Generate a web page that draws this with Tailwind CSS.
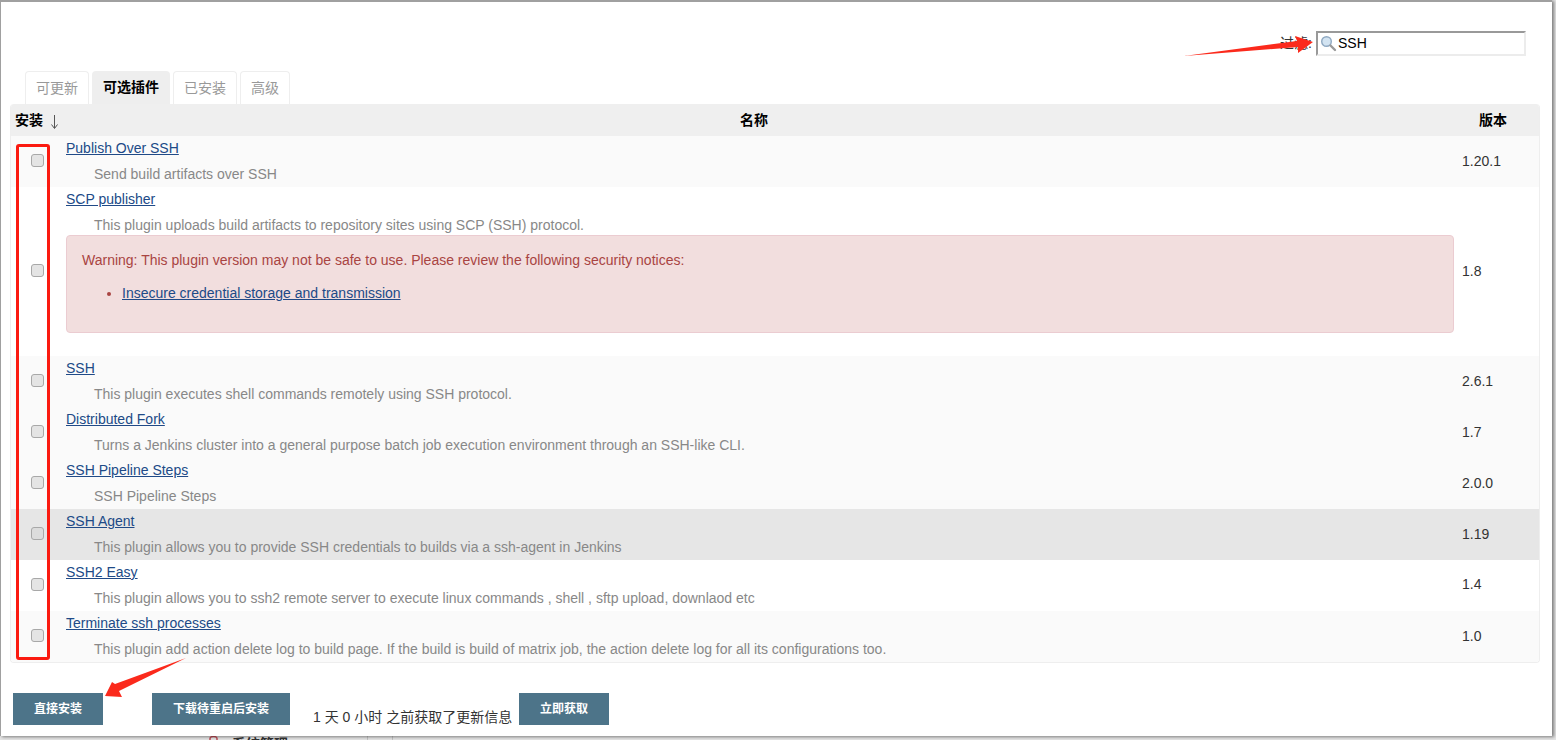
<!DOCTYPE html>
<html lang="en">
<head>
    <meta charset="UTF-8">
    <title>Jenkins Plugins</title>
    <script src="https://cdn.jsdelivr.net/npm/@tailwindcss/browser@4"></script>
</head>
<body class="bg-[#e4e4e4] h-[740px] overflow-hidden text-[14px] text-[#333] font-['Liberation_Sans','Noto_Sans_CJK_SC',sans-serif]">
    <div class="relative z-10 w-[1552px] h-[736px] bg-white border-l border-t-2 border-[#a0a0a0] shadow-[2px_1px_3px_rgba(0,0,0,0.45)]">
        <!-- Filter -->
        <div class="flex justify-end items-center h-[69px] pt-[14px] pr-[26px]">
            <span class="mr-[4px] text-[#333]">过滤:</span>
            <div class="flex items-center w-[210px] h-[25px] border-2 border-[#ececec] border-t-[#999] border-l-[#999] pl-[2px]">
                <svg class="w-[17px] h-[17px] shrink-0" viewBox="0 0 17 17">
                    <circle cx="6.5" cy="6.5" r="4.8" fill="#d3e4f2" stroke="#8fa9c2" stroke-width="1.4"/>
                    <path d="M10.5 10.5L15 15" stroke="#9a9a9a" stroke-width="2.4" stroke-linecap="round"/>
                </svg>
                <span class="ml-[1px] text-black">SSH</span>
            </div>
        </div>

        <!-- Tabs -->
        <div class="flex items-end h-[33px] pl-[24px] gap-[3px]">
            <div class="w-[64px] h-[33px] flex items-center justify-center border border-b-0 border-[#eee] rounded-t text-[#999]">可更新</div>
            <div class="w-[78px] h-[33px] flex items-center justify-center bg-[#eee] rounded-t text-black font-bold">可选插件</div>
            <div class="w-[64px] h-[33px] flex items-center justify-center border border-b-0 border-[#eee] rounded-t text-[#999]">已安装</div>
            <div class="w-[50px] h-[33px] flex items-center justify-center border border-b-0 border-[#eee] rounded-t text-[#999]">高级</div>
        </div>

        <!-- Plugin table -->
        <div class="ml-[9px] w-[1530px] border border-t-0 border-[#eee] rounded overflow-hidden">
            <div class="grid grid-cols-[55px_1fr_77px] items-center h-[32px] bg-[#efefef] text-black font-bold">
                <div class="pl-[4px] flex items-center">安装
                    <svg class="ml-[8px] mt-[3px]" width="7" height="14" viewBox="0 0 7 14"><path d="M3.5 0V13M0.5 9.5L3.5 13.5L6.5 9.5" fill="none" stroke="#555" stroke-width="1"/></svg>
                </div>
                <div class="text-center pr-[20px]">名称</div>
                <div class="text-center pr-[5px] -ml-[10px]">版本</div>
            </div>

            <div class="grid grid-cols-[55px_1fr_77px] h-[51px] bg-[#fafafa]">
                <div class="flex items-center justify-center pr-[3px] pb-[2px]"><input type="checkbox" class="appearance-none w-[13px] h-[13px] bg-[#e4e4e4] border border-[#a8a8a8] rounded-[3px]"></div>
                <div class="pt-[4px]"><a class="block leading-[16px] text-[#204a87] underline">Publish Over SSH</a><p class="mt-[10px] ml-[28px] leading-[16px] text-[#888]">Send build artifacts over SSH</p></div>
                <div class="flex items-center">1.20.1</div>
            </div>

            <div class="grid grid-cols-[55px_1fr_77px] h-[169px] bg-white">
                <div class="flex items-center justify-center pr-[3px] pb-[2px]"><input type="checkbox" class="appearance-none w-[13px] h-[13px] bg-[#e4e4e4] border border-[#a8a8a8] rounded-[3px]"></div>
                <div class="pt-[4px]">
                    <a class="block leading-[16px] text-[#204a87] underline">SCP publisher</a>
                    <p class="mt-[10px] ml-[28px] leading-[16px] text-[#888]">This plugin uploads build artifacts to repository sites using SCP (SSH) protocol.</p>
                    <div class="mt-[2px] w-[1388px] h-[98px] pt-[16px] px-[15px] bg-[#f2dede] border border-[#ebccd1] rounded text-[#a94442]">
                        <p class="leading-[16px]">Warning: This plugin version may not be safe to use. Please review the following security notices:</p>
                        <ul class="mt-[17px] ml-[40px] list-disc"><li class="leading-[16px]"><a class="text-[#204a87] underline">Insecure credential storage and transmission</a></li></ul>
                    </div>
                </div>
                <div class="flex items-center">1.8</div>
            </div>

            <div class="grid grid-cols-[55px_1fr_77px] h-[51px] bg-[#fafafa]">
                <div class="flex items-center justify-center pr-[3px] pb-[2px]"><input type="checkbox" class="appearance-none w-[13px] h-[13px] bg-[#e4e4e4] border border-[#a8a8a8] rounded-[3px]"></div>
                <div class="pt-[4px]"><a class="block leading-[16px] text-[#204a87] underline">SSH</a><p class="mt-[10px] ml-[28px] leading-[16px] text-[#888]">This plugin executes shell commands remotely using SSH protocol.</p></div>
                <div class="flex items-center">2.6.1</div>
            </div>

            <div class="grid grid-cols-[55px_1fr_77px] h-[51px] bg-[#fafafa]">
                <div class="flex items-center justify-center pr-[3px] pb-[2px]"><input type="checkbox" class="appearance-none w-[13px] h-[13px] bg-[#e4e4e4] border border-[#a8a8a8] rounded-[3px]"></div>
                <div class="pt-[4px]"><a class="block leading-[16px] text-[#204a87] underline">Distributed Fork</a><p class="mt-[10px] ml-[28px] leading-[16px] text-[#888]">Turns a Jenkins cluster into a general purpose batch job execution environment through an SSH-like CLI.</p></div>
                <div class="flex items-center">1.7</div>
            </div>

            <div class="grid grid-cols-[55px_1fr_77px] h-[51px] bg-[#fafafa]">
                <div class="flex items-center justify-center pr-[3px] pb-[2px]"><input type="checkbox" class="appearance-none w-[13px] h-[13px] bg-[#e4e4e4] border border-[#a8a8a8] rounded-[3px]"></div>
                <div class="pt-[4px]"><a class="block leading-[16px] text-[#204a87] underline">SSH Pipeline Steps</a><p class="mt-[10px] ml-[28px] leading-[16px] text-[#888]">SSH Pipeline Steps</p></div>
                <div class="flex items-center">2.0.0</div>
            </div>

            <div class="grid grid-cols-[55px_1fr_77px] h-[51px] bg-[#e6e6e6]">
                <div class="flex items-center justify-center pr-[3px] pb-[2px]"><input type="checkbox" class="appearance-none w-[13px] h-[13px] bg-[#dcdcdc] border border-[#a8a8a8] rounded-[3px]"></div>
                <div class="pt-[4px]"><a class="block leading-[16px] text-[#204a87] underline">SSH Agent</a><p class="mt-[10px] ml-[28px] leading-[16px] text-[#888]">This plugin allows you to provide SSH credentials to builds via a ssh-agent in Jenkins</p></div>
                <div class="flex items-center">1.19</div>
            </div>

            <div class="grid grid-cols-[55px_1fr_77px] h-[51px] bg-white">
                <div class="flex items-center justify-center pr-[3px] pb-[2px]"><input type="checkbox" class="appearance-none w-[13px] h-[13px] bg-[#e4e4e4] border border-[#a8a8a8] rounded-[3px]"></div>
                <div class="pt-[4px]"><a class="block leading-[16px] text-[#204a87] underline">SSH2 Easy</a><p class="mt-[10px] ml-[28px] leading-[16px] text-[#888]">This plugin allows you to ssh2 remote server to execute linux commands , shell , sftp upload, downlaod etc</p></div>
                <div class="flex items-center pb-[2px]">1.4</div>
            </div>

            <div class="grid grid-cols-[55px_1fr_77px] h-[51px] bg-[#fafafa]">
                <div class="flex items-center justify-center pr-[3px] pb-[2px]"><input type="checkbox" class="appearance-none w-[13px] h-[13px] bg-[#e4e4e4] border border-[#a8a8a8] rounded-[3px]"></div>
                <div class="pt-[4px]"><a class="block leading-[16px] text-[#204a87] underline">Terminate ssh processes</a><p class="mt-[10px] ml-[28px] leading-[16px] text-[#888]">This plugin add action delete log to build page. If the build is build of matrix job, the action delete log for all its configurations too.</p></div>
                <div class="flex items-center">1.0</div>
            </div>
        </div>

        <!-- Actions -->
        <div class="flex items-end mt-[30px] ml-[12px]">
            <button class="w-[90px] h-[32px] bg-[#4d7489] text-white text-[12px] font-bold">直接安装</button>
            <button class="ml-[49px] w-[138px] h-[32px] bg-[#4d7489] text-white text-[12px] font-bold">下载待重启后安装</button>
            <span class="ml-[23px] w-[206px] leading-[16px] text-[#333]">1 天 0 小时 之前获取了更新信息</span>
            <button class="w-[90px] h-[32px] bg-[#4d7489] text-white text-[12px] font-bold">立即获取</button>
        </div>

        <!-- Red annotations -->
        <div class="absolute left-[15px] top-[142px] w-[34px] h-[516px] border-[3px] border-[#fb1a10] rounded-[3px]"></div>
        <svg class="absolute -left-px -top-[2px] pointer-events-none" width="1552" height="736" viewBox="0 0 1552 736">
            <polygon fill="#fb2a1c" points="1184,56 1297,41 1295,36 1313,42 1298,53 1298,47"/>
            <polygon fill="#fb2a1c" points="186,658 119,691 122,697 105,696 112,682 115,684"/>
        </svg>
    </div>

    <!-- Page underneath the dialog, only its top edge shows -->
    <div class="flex items-start h-[4px] overflow-hidden pl-[209px] font-bold text-[#333]">
        <svg class="shrink-0 mr-[14px]" width="9" height="8" viewBox="0 0 9 8"><path d="M1 8V2.5A3.5 2 0 0 1 8 2.5V8" fill="none" stroke="#c0505a" stroke-width="1.5"/></svg>
        <span class="leading-[16px]">系统管理</span>
        <div class="ml-[79px] w-px h-full bg-[#c4c4c4]"></div>
        <div class="ml-[24px] w-px h-full bg-[#c4c4c4]"></div>
    </div>
</body>
</html>
